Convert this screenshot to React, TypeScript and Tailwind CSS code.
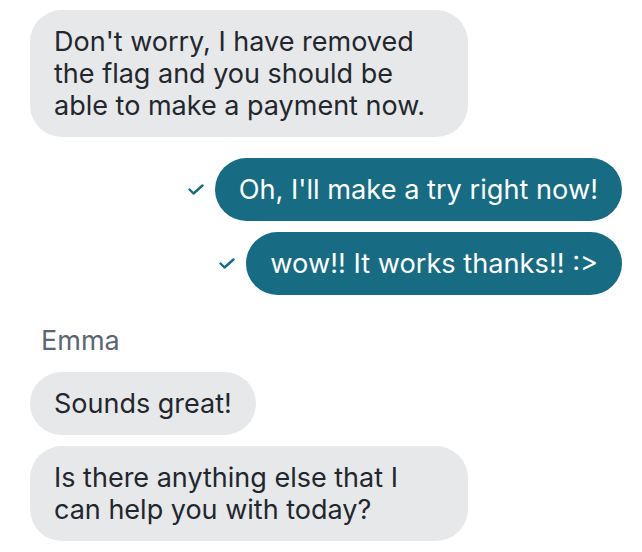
const font = "font-['Inter',_'Noto_Sans',_sans-serif]";

function Check() {
  return (
    <svg viewBox="0 0 16 16" className="w-4 h-4 text-[#176b83]" fill="none" stroke="currentColor" strokeWidth="2.4" strokeLinecap="round" strokeLinejoin="round">
      <path d="M1.5 7.5l4 4 9-8" />
    </svg>
  );
}

function Incoming({ children }: { children: React.ReactNode }) {
  return (
    <div className="self-start max-w-[438px] rounded-[32px] bg-[#e7e8ea] px-6 py-[15.5px] text-[27px] leading-[32px] text-[#22272e]">
      {children}
    </div>
  );
}

function Outgoing({ children }: { children: React.ReactNode }) {
  return (
    <div className="self-end flex items-center gap-[11px]">
      <Check />
      <div className="rounded-full bg-[#176b83] px-6 py-[15.5px] text-[27.2px] leading-[32px] text-white">
        {children}
      </div>
    </div>
  );
}

export default function App() {
  return (
    <div className={`${font} bg-white w-[642px] h-[552px] overflow-hidden pl-[30px] pr-[20px] pt-[10px] flex flex-col`}>
      <Incoming>Don't worry, I have removed the flag and you should be able to make a payment now.</Incoming>
      <div className="mt-[21px] flex flex-col gap-[11px]">
        <Outgoing>Oh, I'll make a try right now!</Outgoing>
        <Outgoing>wow!! It works thanks!! :&gt;</Outgoing>
      </div>
      <div className="mt-[30px] ml-[11px] text-[27px] leading-[32px] text-[#5c6573]">Emma</div>
      <div className="mt-[15px] flex flex-col gap-[11px]">
        <Incoming>Sounds great!</Incoming>
        <Incoming>Is there anything else that I can help you with today?</Incoming>
      </div>
    </div>
  );
}
